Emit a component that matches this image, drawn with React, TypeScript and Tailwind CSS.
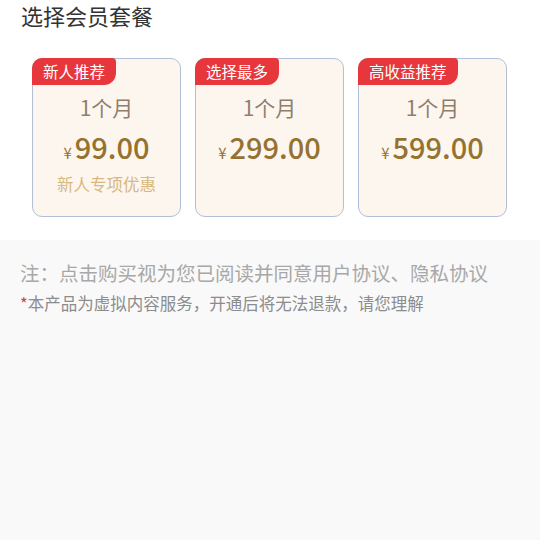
import { FC } from 'react';

interface PlanProps {
  tag: string;
  price: string;
  note?: string;
}

const Plan: FC<PlanProps> = ({ tag, price, note }) => {
  return (
    <div className="relative w-[149px] h-[159px] rounded-[10px] border border-[#b3bfd6] bg-[#fdf6ee] flex flex-col items-center">
      <div className="absolute left-[-1px] top-[-1px] h-[27px] px-[11px] flex items-center bg-[#e8373c] text-white text-[15.5px] rounded-tl-[10px] rounded-tr-[4px] rounded-br-[12px]">
        {tag}
      </div>
      <div className="mt-[35px] text-[21px] leading-[26px] text-[#8f7e6c]">1个月</div>
      <div className="mt-[8px] flex items-baseline text-[#957230]">
        <span className="text-[15px] mr-[3px]">¥</span>
        <span className="text-[29px] leading-[36px] font-medium">{price}</span>
      </div>
      {note && (
        <div className="mt-[8px] text-[16.5px] leading-[22px] text-[#d7b87f]">{note}</div>
      )}
    </div>
  );
};

const App: FC = () => {
  return (
    <div
      className="w-[540px] h-[540px] flex flex-col bg-[#f9f9f9]"
      style={{ fontFamily: '"Noto Sans CJK SC", "Noto Sans", sans-serif' }}
    >
      <div className="bg-white h-[240px]">
        <div className="pl-[21px] text-[22px] leading-[30px] text-[#333333]">选择会员套餐</div>
        <div className="mt-[28px] pl-[32px] flex gap-[14px]">
          <Plan tag="新人推荐" price="99.00" note="新人专项优惠" />
          <Plan tag="选择最多" price="299.00" />
          <Plan tag="高收益推荐" price="599.00" />
        </div>
      </div>
      <div className="pl-[20px] pt-[19px]">
        <div className="text-[19.5px] leading-[28px] text-[#a8a8a8]">注：点击购买视为您已阅读并同意用户协议、隐私协议</div>
        <div className="mt-[5px] text-[16.5px] leading-[22px] text-[#8c8c8c]">
          <span className="text-[#c9454a]">*</span>本产品为虚拟内容服务，开通后将无法退款，请您理解
        </div>
      </div>
    </div>
  );
};

export default App;
